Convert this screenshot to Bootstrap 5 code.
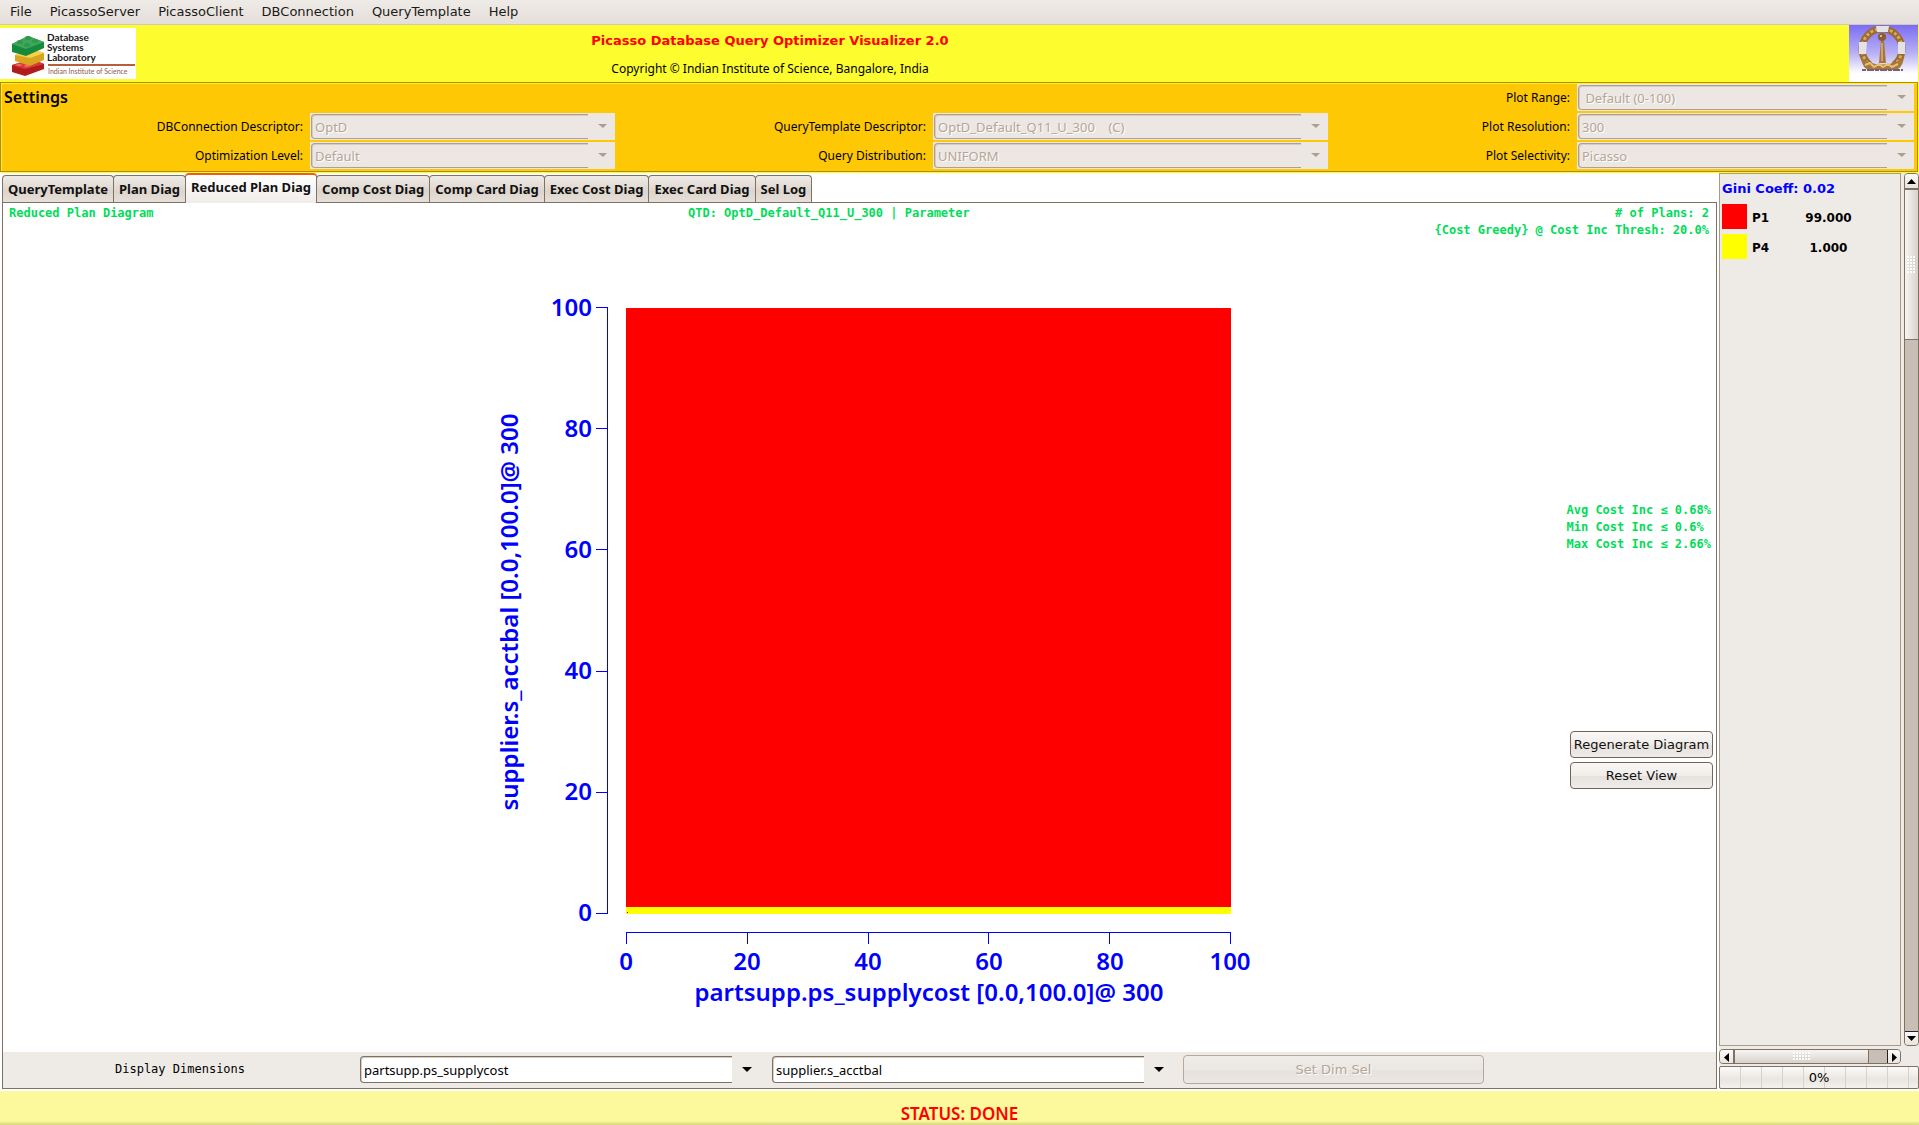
<!DOCTYPE html>
<html lang="en">
<head>
<meta charset="utf-8">
<meta name="viewport" content="width=device-width, initial-scale=1">
<title>Picasso Database Query Optimizer Visualizer</title>
<link href="https://cdn.jsdelivr.net/npm/bootstrap@5.3.0/dist/css/bootstrap.min.css" rel="stylesheet">
<style>
  :root { --line: #7e7265; --soft-line: #a99a8a; --panel: #eeebe7; --trough: #c9beb5; }
  body { font-family: "Noto Sans", "DejaVu Sans", sans-serif; font-size: 12px; line-height: 16px; color: #000; background: #fff; }
  .menubar { height: 25px; padding-left: 10px; gap: 18px; background: linear-gradient(#efebe7, #e4dfd9); border-bottom: 1px solid #cfc6be; font-family: "DejaVu Sans", sans-serif; font-size: 13px; }
  .menubar a { color: #1a1a1a; text-decoration: none; }
  .banner { display: grid; grid-template-columns: 136px 1268fr 445fr 70px; background: #fcfc2e; height: 57px; }
  .banner h1 { font: bold 13px/18px "DejaVu Sans", sans-serif; color: #f00; margin: 7px 0 11px; }
  .lab-logo { width: 136px; height: 51px; margin-top: 3px; }
  .settings { display: grid; grid-template-columns: 301fr 305fr 304fr 395fr 235fr 337fr; gap: 2px 7px; padding: 1px 3px 2px 1px; margin-right: 1px; background: #ffc804; border: 1px solid #b08c00; box-shadow: inset 1px 1px #ffee20, 1px 1px #fcfc2e; }
  .settings h2 { grid-column: 1 / 5; font-size: 16px; line-height: 27px; font-weight: 600; margin: 0; padding-left: 2px; }
  .settings label { text-align: right; line-height: 27px; }
  .combo { display: flex; background: #ece7e3; padding: 1px; height: 27px; }
  .combo select { flex: 1; min-width: 0; appearance: none; border: 1px solid #aea08f; border-right: 0; border-radius: 4px 0 0 4px; background: #ece7e3; color: #b3a696; opacity: 1; padding: 0 3px; font: 13px/20px "Noto Sans", sans-serif; text-shadow: 1px 1px #fff; box-shadow: inset 1px 1px #d5ccc4; }
  .combo svg { width: 26px; height: 25px; fill: #ac9f90; }
  .combo-live { background: none; height: 29px; }
  .combo-live select { background: #fff; color: #000; border-color: var(--line); text-shadow: none; }
  .combo-live svg { width: 33px; height: 27px; fill: #000; }
  .work { flex: 1; min-height: 0; padding: 1px 0 2px 2px; }
  .plan-tabs { height: 29px; align-items: flex-end; }
  .plan-tabs button { height: 27px; border: 1px solid var(--line); border-bottom: 0; border-radius: 4px 4px 0 0; background: linear-gradient(#efebe7, #ddd5cd 60%, #e6e0da); font: bold 13px/24px "Noto Sans", sans-serif; color: #111; padding: 0 5px; margin-right: -1px; }
  .plan-tabs button.active { height: 30px; border-top: 2px solid #f05a20; background: linear-gradient(#fff, #f0ece8); padding-bottom: 4px; margin-bottom: -1px; z-index: 1; }
  .sheet { border: 1px solid var(--line); flex: 1; min-height: 0; }
  .green { font: bold 12px/17px "DejaVu Sans Mono", monospace; color: #00dd58; }
  .captions { display: grid; grid-template-columns: 681fr 559fr 465fr; padding: 2px 7px 0 6px; }
  .left-space { flex: 489 1 0; }
  .side-info { flex: 464 1 0; padding-right: 3px; }
  .costs { margin: 263px 2px 178px 0; }
  .gtk-btn { height: 27px; width: 143px; border: 1px solid #6f6659; border-radius: 4px; background: linear-gradient(#f9f8f6, #f0edea 50%, #e6e1dc 52%, #efecea); font: 13px/20px "DejaVu Sans", sans-serif; padding: 0; color: #111; }
  .gtk-btn:disabled { width: 301px; height: 29px; border-color: #b5a999; color: #b3a696; background: linear-gradient(#efebe7, #ebe7e3 50%, #e6e1dc 52%, #ebe7e3); text-shadow: 1px 1px #fff; }
  .dims { background: var(--panel); height: 36px; padding: 0 0 1px 112px; }
  .dims label { font: 12px/17px "DejaVu Sans Mono", monospace; width: 244px; }
  .dims .combo { width: 412px; padding-right: 6px; }
  .legend-col { width: 200px; margin-left: 2px; background: var(--panel); }
  .legend-pane { width: 182px; border: 1px solid var(--soft-line); font-family: "DejaVu Sans", sans-serif; font-weight: bold; padding: 0 2px; }
  .legend-pane h3 { font: bold 13px/30px "DejaVu Sans", sans-serif; color: #00f; margin: 0; }
  .swatch { width: 25px; height: 25px; margin-bottom: 5px; }
  .plan-row td { padding: 0; height: 30px; vertical-align: top; line-height: 28px; }
  .plan-row td:nth-child(1) { width: 30px; }
  .plan-row td:nth-child(2) { width: 45px; }
  .plan-row td:nth-child(4) { width: 38px; }
  .vbar { width: 15px; margin-left: 3px; background: var(--trough); border: 1px solid var(--line); border-radius: 4px; }
  .arrow-btn { width: 13px; height: 14px; background: linear-gradient(#fbfaf8, #e8e3de); border: 0; padding: 0; display: flex; align-items: center; justify-content: center; flex: none; }
  .arrow-btn svg { width: 9px; height: 9px; }
  .vthumb { height: 152px; background: linear-gradient(90deg, #f6f4f2, #d9d2cb); border-top: 2px solid var(--line); border-bottom: 1px solid var(--line); display: flex; align-items: center; justify-content: center; }
  .hbar { height: 15px; width: 182px; margin: 3px 0 2px; border: 1px solid var(--line); border-radius: 4px; background: var(--trough); }
  .hthumb { width: 136px; background: linear-gradient(#f6f4f2, #d9d2cb); border-left: 2px solid var(--line); border-right: 1px solid var(--line); display: flex; align-items: center; justify-content: center; }
  .grip { width: 17px; height: 9px; background: radial-gradient(circle at 1px 1px, #fff 1px, #cfc8c0 1px, transparent 2px) 0 0 / 3px 3px; }
  .grip-tall { width: 9px; height: 17px; }
  .load { height: 23px; border: 1px solid var(--line); border-radius: 2px; background: repeating-linear-gradient(90deg, transparent 0 20px, #d6d1cc 20px 21px), linear-gradient(#fbfaf9, #e9e5e1 60%, #f3f1ef); font: 13px/21px "DejaVu Sans", sans-serif; }
  .status-line { height: 34px; background: linear-gradient(#fbf99b 88%, #d8d67e); color: #f00; font-weight: 600; font-size: 17px; line-height: 34px; padding-top: 6px; }
</style>
</head>
<body>
<div class="d-flex flex-column vh-100 overflow-hidden">
  <nav class="menubar d-flex align-items-center flex-shrink-0" aria-label="Main menu">
    <a href="#">File</a><a href="#">PicassoServer</a><a href="#">PicassoClient</a><a href="#">DBConnection</a><a href="#">QueryTemplate</a><a href="#">Help</a>
  </nav>

  <header class="banner flex-shrink-0">
    <svg class="lab-logo" viewBox="0 0 136 51" role="img" aria-label="Database Systems Laboratory">
      <rect width="136" height="51" fill="#fff"/>
      <path d="M12 37 32 31 44 36V41L25 48 12 44Z" fill="#b01c1c"/><path d="M12 37 32 31 44 36 25 41Z" fill="#e0383a"/>
      <path d="M15 27 32 21 44 25V32L30 38 15 33Z" fill="#d9a520"/><path d="M15 27 32 21 44 25 30 30Z" fill="#f6d24a"/>
      <path d="M12 16 28 8 44 14V20L26 28 12 24Z" fill="#158a3c"/><path d="M12 16 28 8 44 14 26 21Z" fill="#3fa75c"/>
      <g fill="#2d9a4c"><ellipse cx="20" cy="14" rx="3" ry="2"/><ellipse cx="28" cy="10" rx="3" ry="2"/><ellipse cx="35" cy="13" rx="3" ry="2"/><ellipse cx="27" cy="17" rx="3" ry="2"/></g>
      <g fill="#ee6a64"><ellipse cx="19" cy="37" rx="3" ry="1"/><ellipse cx="27" cy="38" rx="3" ry="1"/></g>
      <g font-family="Lato, sans-serif" font-size="10" font-weight="700" fill="#181818"><text x="47" y="13">Database</text><text x="47" y="23">Systems</text><text x="47" y="33">Laboratory</text></g>
      <path d="M48 37H135" stroke="#b5603a" stroke-width="2"/>
      <text x="48" y="46" font-family="Lato, sans-serif" font-size="7" fill="#8a5a48">Indian Institute of Science</text>
    </svg>
    <div class="text-center">
      <h1>Picasso Database Query Optimizer Visualizer 2.0</h1>
      <div>Copyright © Indian Institute of Science, Bangalore, India</div>
    </div>
    <div></div>
    <svg width="69" height="57" viewBox="0 0 69 57" role="img" aria-label="Institute seal">
      <defs><linearGradient id="sky" x2="0" y2="1"><stop offset="0" stop-color="#7c6cf4"/><stop offset=".5" stop-color="#b9b2f4"/><stop offset=".85" stop-color="#fff"/></linearGradient></defs>
      <rect width="69" height="57" fill="url(#sky)"/>
      <path d="M21 40A20 20 0 1 1 45 40" fill="none" stroke="#9a6a30" stroke-width="7"/>
      <path d="M19 38A20 20 0 1 1 47 38" fill="none" stroke="#d6a860" stroke-width="3" stroke-dasharray="3 2"/>
      <path d="M12 33Q14 46 22 45H45Q53 45 55 33L47 37Q33 42 20 37Z" fill="#a87838"/>
      <path d="M16 40l5-2 4 4 5-3 4 3 5-3 4 3 6-3" stroke="#e4bf7c" stroke-width="2" fill="none"/>
      <path d="M10 17h8l-1 12h-7zM49 17h7v12h-7zM27 1l13 0-1 6-11 0z" fill="#e4e2e4"/>
      <path d="M32 16h3l2 22h-7z" fill="#a8743a"/><path d="M33 18v18" stroke="#f0cf98"/><circle cx="33" cy="12" r="4" fill="#8a5c30"/><circle cx="32" cy="11" r="1" fill="#f0d8a8"/>
      <path d="M13 45H54" stroke="#74627c" stroke-width="2" stroke-dasharray="4 1 7 1"/>
    </svg>
  </header>

  <form class="settings flex-shrink-0">
    <h2>Settings</h2>
    <label for="range">Plot Range:</label>
    <div class="combo"><select id="range" disabled><option>&nbsp;Default (0-100)</option></select><svg viewBox="0 0 26 25"><path d="M10 10h9l-4 4z"/></svg></div>
    <label for="conn">DBConnection Descriptor:</label>
    <div class="combo"><select id="conn" disabled><option>OptD</option></select><svg viewBox="0 0 26 25"><path d="M10 10h9l-4 4z"/></svg></div>
    <label for="qtd">QueryTemplate Descriptor:</label>
    <div class="combo"><select id="qtd" disabled><option>OptD_Default_Q11_U_300&nbsp;&nbsp;&nbsp; (C)</option></select><svg viewBox="0 0 26 25"><path d="M10 10h9l-4 4z"/></svg></div>
    <label for="res">Plot Resolution:</label>
    <div class="combo"><select id="res" disabled><option>300</option></select><svg viewBox="0 0 26 25"><path d="M10 10h9l-4 4z"/></svg></div>
    <label for="opt">Optimization Level:</label>
    <div class="combo"><select id="opt" disabled><option>Default</option></select><svg viewBox="0 0 26 25"><path d="M10 10h9l-4 4z"/></svg></div>
    <label for="dist">Query Distribution:</label>
    <div class="combo"><select id="dist" disabled><option>UNIFORM</option></select><svg viewBox="0 0 26 25"><path d="M10 10h9l-4 4z"/></svg></div>
    <label for="sel">Plot Selectivity:</label>
    <div class="combo"><select id="sel" disabled><option>Picasso</option></select><svg viewBox="0 0 26 25"><path d="M10 10h9l-4 4z"/></svg></div>
  </form>

  <main class="work d-flex">
    <section class="d-flex flex-column flex-grow-1">
      <div class="plan-tabs d-flex flex-shrink-0" role="tablist">
        <button role="tab">QueryTemplate</button><button role="tab">Plan Diag</button><button role="tab" class="active" aria-selected="true">Reduced Plan Diag</button><button role="tab">Comp Cost Diag</button><button role="tab">Comp Card Diag</button><button role="tab">Exec Cost Diag</button><button role="tab">Exec Card Diag</button><button role="tab">Sel Log</button>
      </div>
      <div class="sheet d-flex flex-column">
        <div class="captions green">
          <span>Reduced Plan Diagram</span><span>QTD: OptD_Default_Q11_U_300 | Parameter</span>
          <span class="text-end"># of Plans: 2<br>{Cost Greedy} @ Cost Inc Thresh: 20.0%</span>
        </div>
        <div class="d-flex flex-grow-1">
          <div class="left-space"></div>
          <svg class="mt-5 flex-shrink-0" width="760" height="724" viewBox="490 286 760 724" role="img" aria-label="Reduced plan diagram">
            <g shape-rendering="crispEdges">
              <rect x="626" y="307" width="605" height="599" fill="#f00"/>
              <rect x="626" y="906" width="605" height="7" fill="#ff0"/><rect x="627" y="911" width="1" height="1" fill="#a00"/>
              <path d="M596 306.500H607.500V912.500H596M596 427.500H607M596 548.500H607M596 670.500H607M596 791.500H607M626.500 943V931.500H1230.500V943M747.500 931V943M868.500 931V943M988.500 931V943M1109.500 931V943" fill="none" stroke="#00f"/>
            </g>
            <g font-family="Noto Sans, sans-serif" font-size="24" font-weight="600" fill="#00f">
              <g text-anchor="end"><text x="592" y="315">100</text><text x="592" y="436">80</text><text x="592" y="557">60</text><text x="592" y="678">40</text><text x="592" y="799">20</text><text x="592" y="920">0</text></g>
              <g text-anchor="middle"><text x="626" y="969">0</text><text x="747" y="969">20</text><text x="868" y="969">40</text><text x="989" y="969">60</text><text x="1110" y="969">80</text><text x="1230" y="969">100</text>
                <text x="929" y="1000">partsupp.ps_supplycost [0.0,100.0]@ 300</text></g>
              <text transform="translate(518 611) rotate(-90)" text-anchor="middle">supplier.s_acctbal [0.0,100.0]@ 300</text>
            </g>
          </svg>
          <div class="side-info d-flex flex-column align-items-end">
            <div class="green costs">Avg Cost Inc ≤ 0.68%<br>Min Cost Inc ≤ 0.6%<br>Max Cost Inc ≤ 2.66%</div>
            <div class="d-flex flex-column gap-1"><button class="gtk-btn" type="button">Regenerate Diagram</button><button class="gtk-btn" type="button">Reset View</button></div>
          </div>
        </div>
        <div class="dims d-flex align-items-center flex-shrink-0">
          <label for="dimx">Display Dimensions</label>
          <div class="combo combo-live"><select id="dimx"><option>partsupp.ps_supplycost</option></select><svg viewBox="0 0 33 27"><path d="M10 11h10l-5 5z"/></svg></div>
          <div class="combo combo-live"><select id="dimy" aria-label="Second dimension"><option>supplier.s_acctbal</option></select><svg viewBox="0 0 33 27"><path d="M10 11h10l-5 5z"/></svg></div>
          <button class="gtk-btn" type="button" disabled>Set Dim Sel</button>
        </div>
      </div>
    </section>

    <aside class="legend-col d-flex flex-column flex-shrink-0">
      <div class="d-flex flex-grow-1">
        <div class="legend-pane">
          <h3>Gini Coeff: 0.02</h3>
          <table class="w-100">
            <tr class="plan-row"><td><div class="swatch" style="background:#f00"></div></td><td>P1</td><td class="text-center">99.000</td><td></td></tr>
            <tr class="plan-row"><td><div class="swatch" style="background:#ff0"></div></td><td>P4</td><td class="text-center">1.000</td><td></td></tr>
          </table>
        </div>
        <div class="vbar d-flex flex-column justify-content-between overflow-hidden">
          <div><button class="arrow-btn" type="button" aria-label="Scroll up"><svg viewBox="0 0 9 9"><path d="M0 7h9L4.500 2z"/></svg></button><div class="vthumb"><div class="grip grip-tall"></div></div></div>
          <button class="arrow-btn border-top border-dark" type="button" aria-label="Scroll down"><svg viewBox="0 0 9 9"><path d="M0 2h9L4.500 7z"/></svg></button>
        </div>
      </div>
      <div class="hbar d-flex overflow-hidden">
        <button class="arrow-btn" type="button" aria-label="Scroll left"><svg viewBox="0 0 9 9"><path d="M7 0v9L2 4.500z"/></svg></button>
        <div class="hthumb"><div class="grip"></div></div>
        <button class="arrow-btn ms-auto border-start border-dark" type="button" aria-label="Scroll right"><svg viewBox="0 0 9 9"><path d="M2 0v9L7 4.500z"/></svg></button>
      </div>
      <div class="load text-center" role="progressbar" aria-valuenow="0" aria-valuemin="0" aria-valuemax="100">0%</div>
    </aside>
  </main>
  <footer class="status-line text-center flex-shrink-0">STATUS: DONE</footer>
</div>
<script src="https://cdn.jsdelivr.net/npm/bootstrap@5.3.0/dist/js/bootstrap.bundle.min.js"></script>
</body>
</html>
